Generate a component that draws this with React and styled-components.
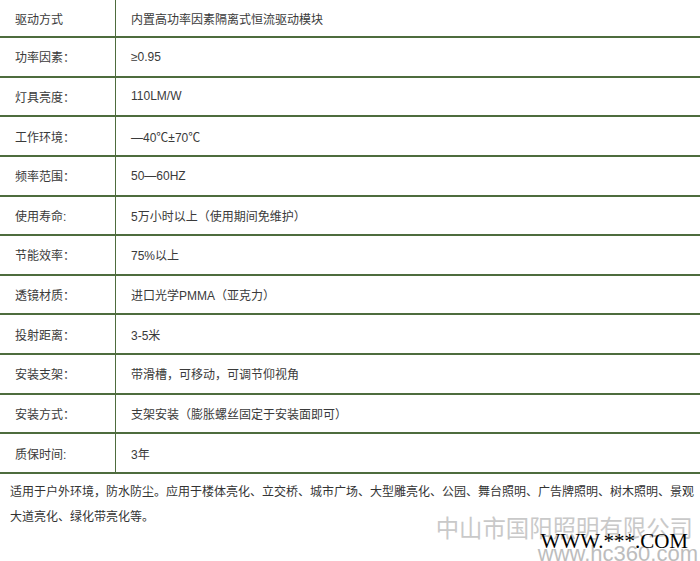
import React from 'react'
import styled, { createGlobalStyle } from 'styled-components'

const GlobalStyle = createGlobalStyle`
    html, body {
        margin: 0;
        padding: 0;
        background: #ffffff;
    }
    body {
        font-family: "Liberation Sans", "Noto Sans CJK SC", sans-serif;
        font-size: 12px;
        color: #3a3a3a;
    }
`

const Page = styled.div`
    position: relative;
    width: 700px;
    height: 561px;
    overflow: hidden;
`

const Table = styled.div`
    display: flex;
    flex-direction: column;
`

const Row = styled.div`
    display: flex;
    align-items: stretch;
    height: ${props => props.first ? '36px' : '37.64px'};
    border-bottom: 2px solid #4e6c3e;
`

const Label = styled.div`
    width: 100px;
    flex: none;
    padding-left: 15px;
    display: flex;
    align-items: center;
    border-right: 1px solid #4e6c3e;
`

const Value = styled.div`
    flex: 1;
    padding-left: 15px;
    display: flex;
    align-items: center;
    white-space: nowrap;
`

const Note = styled.p`
    margin: 0;
    padding: 6px 4px 0 10px;
    line-height: 25px;
    font-size: 12px;
    color: #333333;
`

// watermark stamped over the bottom right corner of the picture
const Watermark = styled.div`
    position: absolute;
    right: 0;
    bottom: 0;
    display: grid;
    grid-template-rows: 15px 8px 24px;
    justify-items: end;
    padding-right: 2px;
`

const Company = styled.div`
    grid-row: 1 / 3;
    grid-column: 1;
    margin-right: 5px;
    font-family: "Noto Sans CJK SC", sans-serif;
    font-size: 23.4px;
    line-height: 26px;
    color: #c9c9c9;
    white-space: nowrap;
`

const Site = styled.div`
    grid-row: 2 / 4;
    grid-column: 1;
    align-self: end;
    font-family: "Liberation Sans", sans-serif;
    font-size: 22px;
    line-height: 24px;
    color: #bdbdbd;
    white-space: nowrap;
    margin-bottom: -5px;
`

const Mask = styled.div`
    grid-row: 2 / 3;
    grid-column: 1;
    margin-right: 10px;
    font-family: "Liberation Serif", serif;
    font-size: 21px;
    line-height: 24px;
    color: #000000;
    white-space: nowrap;
`

const specs = [
    ['驱动方式', '内置高功率因素隔离式恒流驱动模块'],
    ['功率因素：', '≥0.95'],
    ['灯具亮度：', '110LM/W'],
    ['工作环境：', '—40℃±70℃'],
    ['频率范围：', '50—60HZ'],
    ['使用寿命:', '5万小时以上（使用期间免维护）'],
    ['节能效率：', '75%以上'],
    ['透镜材质：', '进口光学PMMA（亚克力）'],
    ['投射距离：', '3-5米'],
    ['安装支架：', '带滑槽，可移动，可调节仰视角'],
    ['安装方式：', '支架安装（膨胀螺丝固定于安装面即可）'],
    ['质保时间:', '3年'],
]

export default function App() {
    return (
        <Page>
            <GlobalStyle />
            <Table>
                {specs.map(([label, value], i) => (
                    <Row key={label} first={i === 0 ? 1 : 0}>
                        <Label>{label}</Label>
                        <Value>{value}</Value>
                    </Row>
                ))}
            </Table>
            <Note>
                适用于户外环境，防水防尘。应用于楼体亮化、立交桥、城市广场、大型雕亮化、公园、舞台照明、广告牌照明、树木照明、景观大道亮化、绿化带亮化等。
            </Note>
            <Watermark>
                <Company>中山市国阳照明有限公司</Company>
                <Site>www.hc360.com</Site>
                <Mask>WWW.***.COM</Mask>
            </Watermark>
        </Page>
    )
}
